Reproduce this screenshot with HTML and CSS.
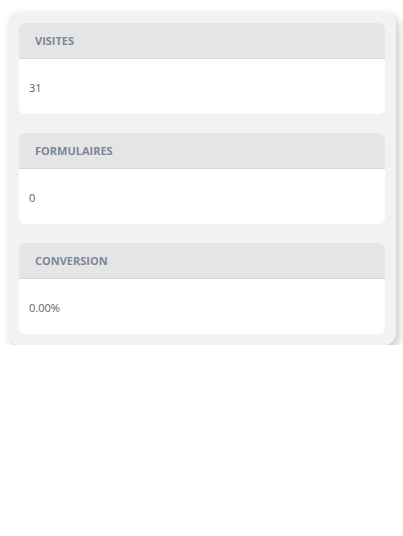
FILE: index.html
```html
<!DOCTYPE html>
<html lang="fr">
<head>
<meta charset="utf-8">
<link rel="stylesheet" href="styles.css">
</head>
<body>
<div class="panel">
  <div class="card">
    <div class="card-head">VISITES</div>
    <div class="card-body">31</div>
  </div>
  <div class="card">
    <div class="card-head">FORMULAIRES</div>
    <div class="card-body">0</div>
  </div>
  <div class="card">
    <div class="card-head">CONVERSION</div>
    <div class="card-body">0.00%</div>
  </div>
</div>
</body>
</html>
```
FILE: styles.css
```css
html, body {
  margin: 0;
  padding: 0;
  background: #ffffff;
  font-family: "Open Sans", "Liberation Sans", sans-serif;
}
.panel {
  margin: 12px 7px 0 8px;
  padding: 11px;
  background: #f2f2f2;
  border-radius: 12px;
  box-shadow: 3px 4px 10px rgba(0, 0, 0, 0.22);
  display: flex;
  flex-direction: column;
  gap: 19px;
}
.card {
  background: #ffffff;
  border-radius: 6px;
  overflow: hidden;
}
.card-head {
  height: 36px;
  box-sizing: border-box;
  background: #e5e5e5;
  border-bottom: 1px solid #d8d8d8;
  padding-left: 16px;
  display: flex;
  align-items: center;
  font-size: 11px;
  font-weight: 700;
  color: #7b8698;
}
.card-body {
  height: 55px;
  box-sizing: border-box;
  padding-left: 10px;
  display: flex;
  align-items: center;
  font-size: 11px;
  color: #5c5f63;
  padding-top: 2px;
}
```
